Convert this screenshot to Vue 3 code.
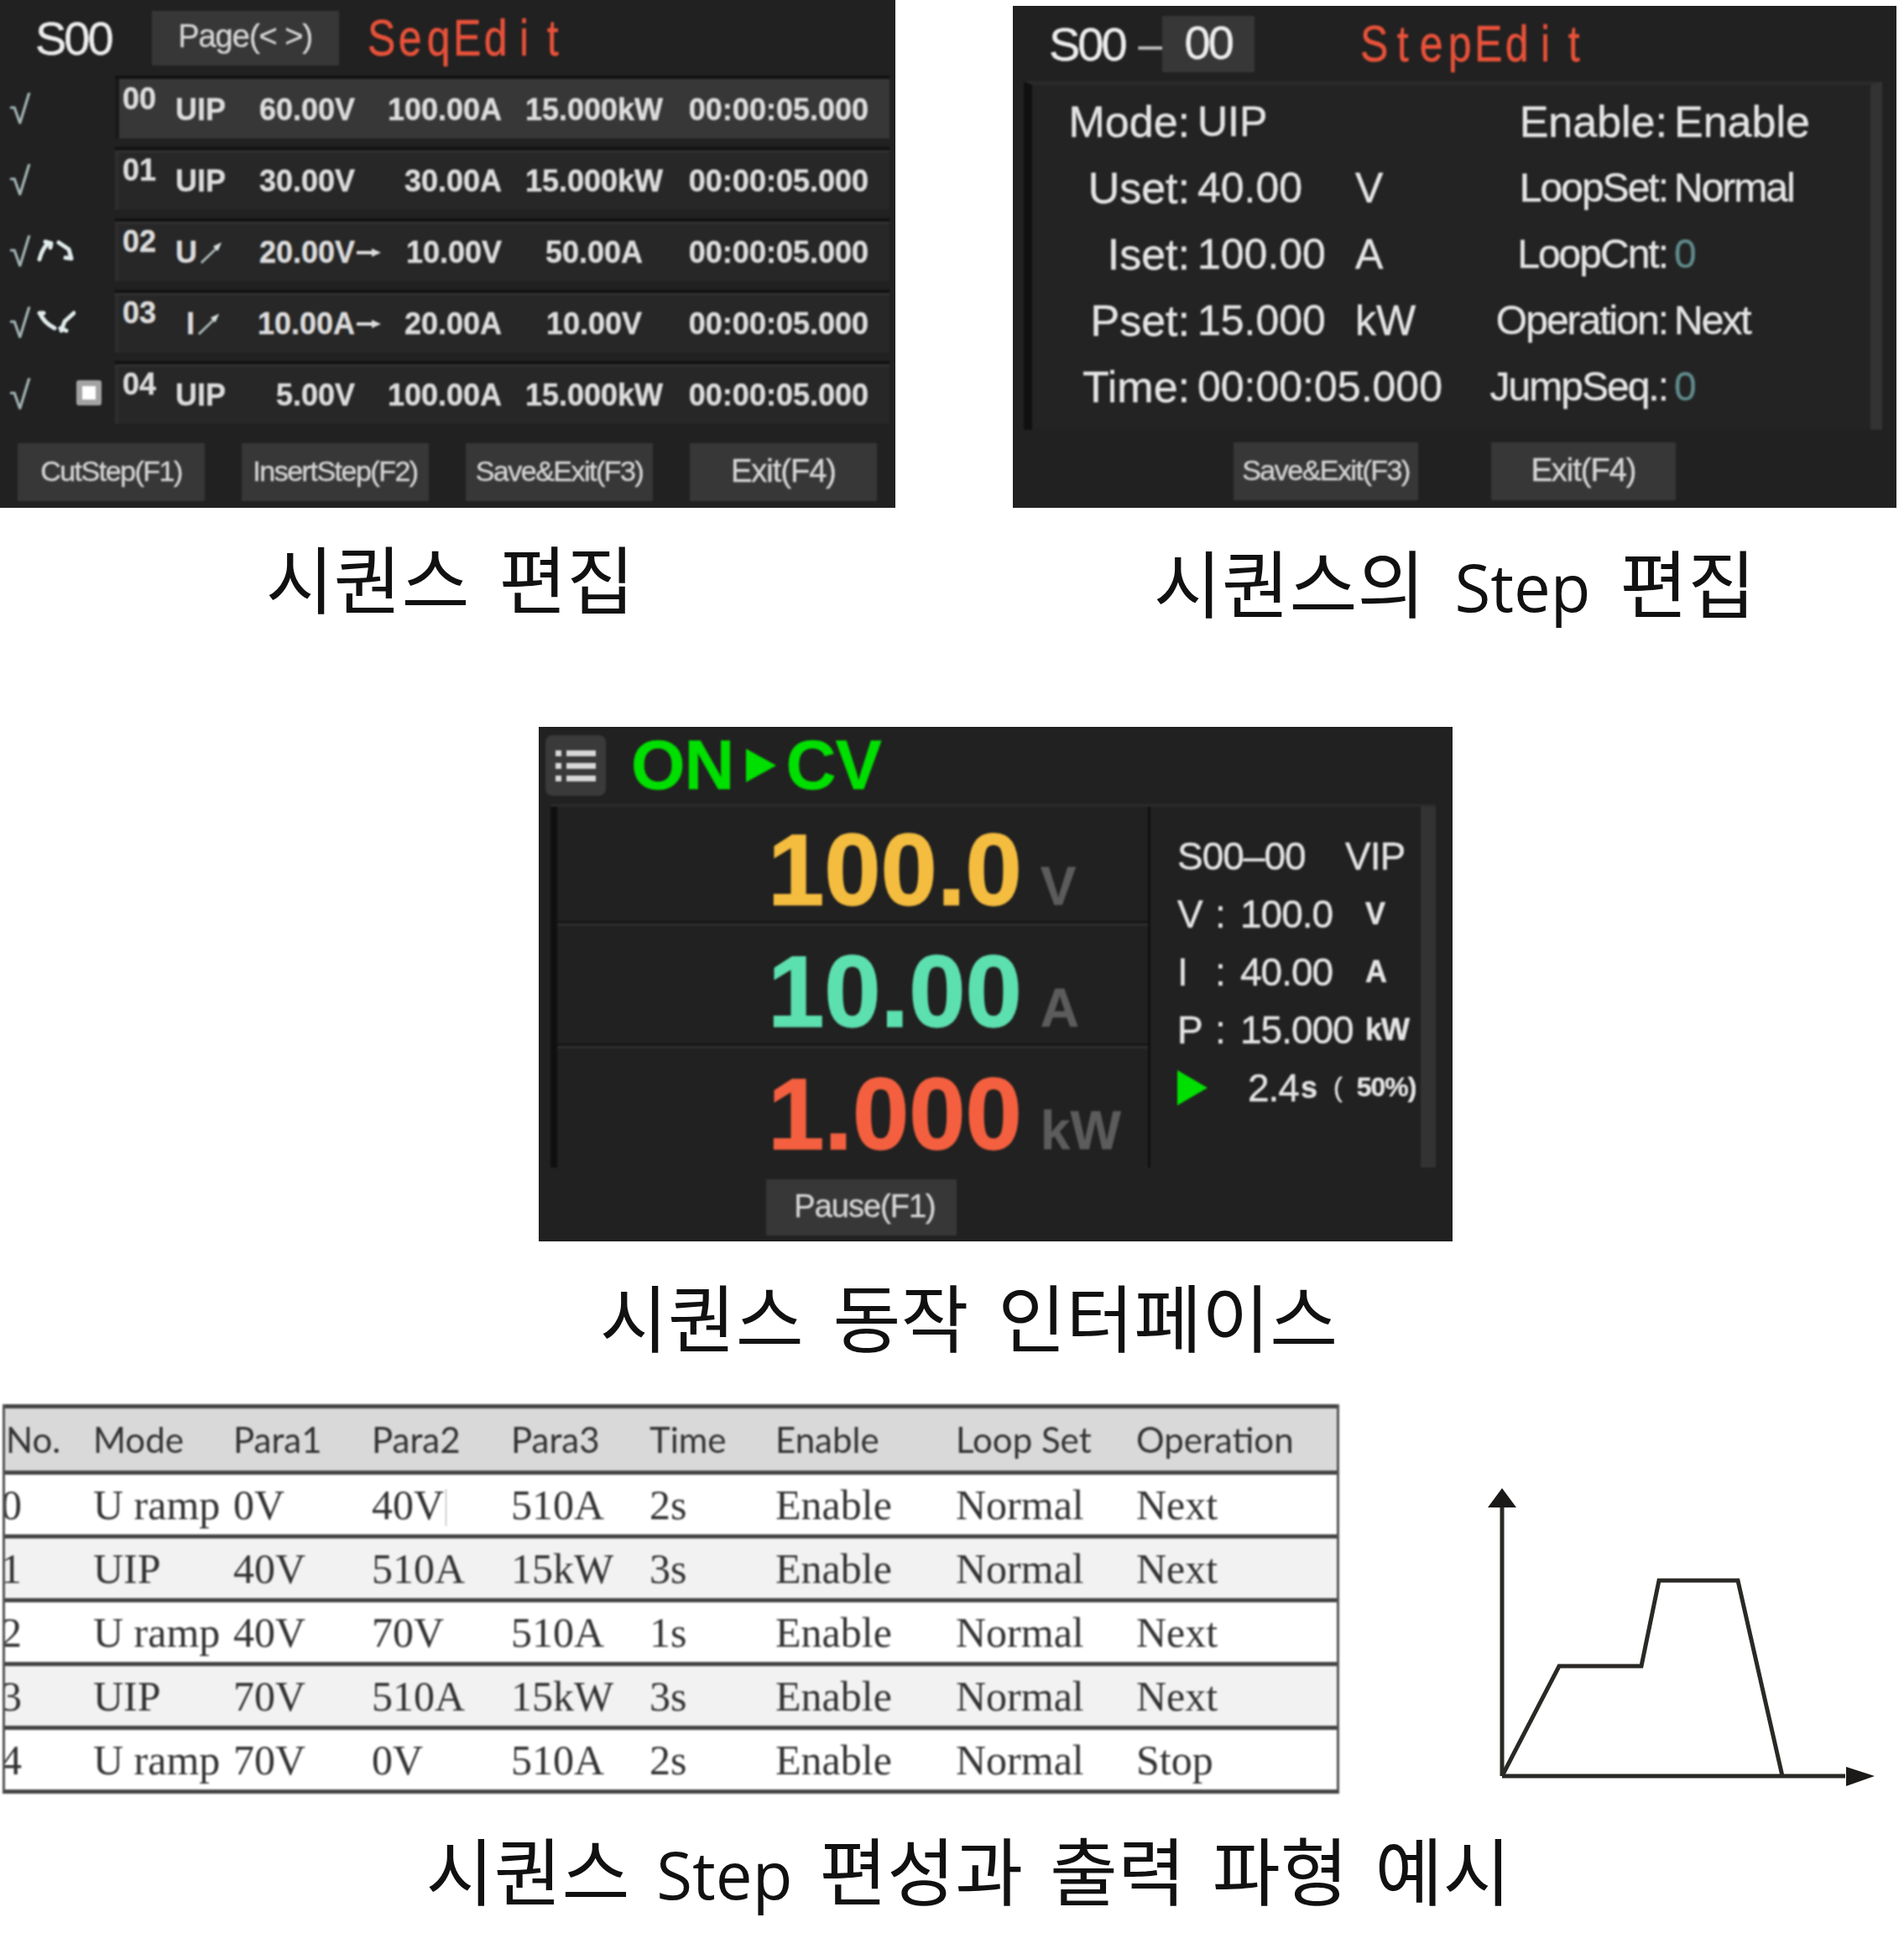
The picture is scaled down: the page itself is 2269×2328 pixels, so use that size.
<template>
  <div class="page">
    <div class="top-row">
      <div class="fig-seq">
        <div class="panel seq-panel">
          <div class="seq-head">
            <span class="sid">S00</span>
            <span class="soft-btn page-btn">Page(&lt; &gt;)</span>
            <span class="title"><span v-for="(c, i) in 'SeqEdit'" :key="i" class="slot">{{ c }}</span></span>
          </div>
          <div class="seq-list">
            <div v-for="(r, i) in seqRows" :key="r.no" class="seq-line">
              <div class="status">
                <span class="check">√</span>
                <svg v-if="r.icon === 'up'" class="ramp" viewBox="0 0 46 28" fill="none" stroke="#e2ecec" stroke-width="5" stroke-linecap="round" stroke-linejoin="round">
                  <path d="M3 25 Q6 13 13 6 M10 4 L17 6 L16 11" />
                  <path d="M26 5 L38 13 L41 24 M41 24 L34 23" />
                </svg>
                <svg v-if="r.icon === 'down'" class="ramp" viewBox="0 0 46 28" fill="none" stroke="#e2ecec" stroke-width="5" stroke-linecap="round" stroke-linejoin="round">
                  <path d="M3 4 L8 4 M4 5 Q8 15 21 22" />
                  <path d="M29 25 L33 14 L44 4 M28 22 L35 25" />
                </svg>
                <span v-if="r.icon === 'stop'" class="stop"></span>
              </div>
              <div class="seq-row" :class="{ active: i === 0 }">
                <span class="no">{{ r.no }}</span>
                <span class="mode" :class="{ shifted: r.mode === 'I' }">
                  {{ r.mode }}
                  <svg v-if="r.ramp" class="ramp-arrow" viewBox="0 0 30 30">
                    <path d="M2 28 L24 7" stroke="#a9b8b8" stroke-width="3" />
                    <path d="M28 2 L17 7 L23 13 Z" fill="#d5dddd" />
                  </svg>
                </span>
                <span class="val">{{ r.a }}</span>
                <span class="arrow"><svg v-if="r.ramp" viewBox="0 0 30 12" width="30" height="12"><path d="M0 6 H20" stroke="#ddd" stroke-width="4" /><path d="M18 1 L29 6 L18 11 Z" fill="#ddd" /></svg></span>
                <span class="val">{{ r.b }}</span>
                <span class="val mid">{{ r.c }}</span>
                <span class="val">{{ r.t }}</span>
              </div>
            </div>
          </div>
          <div class="seq-btns">
            <span v-for="b in seqBtns" :key="b" class="soft-btn seq-btn" :class="{ wide: b === 'Exit(F4)' }">{{ b }}</span>
          </div>
        </div>
        <div class="caption cap-one">시퀀스 편집</div>
      </div>

      <div class="fig-step">
        <div class="panel step-panel">
          <div class="step-head">
            <span class="sid">S00</span>
            <span class="dash">–</span>
            <span class="soft-btn step-box">00</span>
            <span class="title step-title"><span v-for="(c, i) in 'StepEdit'" :key="i" class="slot">{{ c }}</span></span>
          </div>
          <div class="step-body">
            <div v-for="r in stepRows" :key="r.label" class="step-line">
              <span class="s-label">{{ r.label }}</span>
              <span class="s-value">{{ r.value }}</span>
              <span class="s-unit">{{ r.unit }}</span>
              <span class="s-label2" :class="{ wide: r.wide }">{{ r.label2 }}</span>
              <span class="s-value2" :class="{ wide: r.wide, teal: r.value2 === '0' }">{{ r.value2 }}</span>
            </div>
          </div>
          <div class="step-btns">
            <span class="soft-btn step-btn">Save&amp;Exit(F3)</span>
            <span class="soft-btn step-btn wide">Exit(F4)</span>
          </div>
        </div>
        <div class="caption cap-two">시퀀스의 <span class="lat">Step</span> 편집</div>
      </div>
    </div>

    <div class="fig-run">
      <div class="panel run-panel">
        <div class="run-head">
          <span class="menu-btn">
            <svg viewBox="0 0 52 46" width="52" height="46">
              <g fill="#d8d8d8">
                <rect x="2" y="5" width="7" height="7" />
                <rect x="15" y="5" width="35" height="7" />
                <rect x="2" y="20" width="7" height="7" />
                <rect x="15" y="20" width="35" height="7" />
                <rect x="2" y="35" width="7" height="7" />
                <rect x="15" y="35" width="35" height="7" />
              </g>
            </svg>
          </span>
          <span class="run-state">ON</span>
          <svg class="run-tri" viewBox="0 0 36 40" width="36" height="40"><path d="M0 0 L36 20 L0 40 Z" fill="#00e000" /></svg>
          <span class="run-state">CV</span>
        </div>
        <div class="run-body">
          <div class="run-main">
            <div v-for="m in meters" :key="m.unit" class="meter">
              <span class="meter-val" :style="{ color: m.color }">{{ m.value }}</span>
              <span class="meter-unit">{{ m.unit }}</span>
            </div>
          </div>
          <div class="run-side">
            <div class="side-line">
              <span class="side-id">S00–00</span>
              <span>VIP</span>
            </div>
            <div v-for="s in sideRows" :key="s.k" class="side-line">
              <span class="side-k">{{ s.k }}</span>
              <span class="side-colon">:</span>
              <span class="side-v">{{ s.v }}</span>
              <span class="side-u">{{ s.u }}</span>
            </div>
            <div class="side-line">
              <svg class="side-tri" viewBox="0 0 36 42" width="36" height="42"><path d="M0 0 L36 21 L0 42 Z" fill="#00e000" /></svg>
              <span>2.4</span><span class="side-s">s</span>
              <span class="side-paren">(</span>
              <span class="side-pct">50%)</span>
            </div>
          </div>
          <div class="run-bar"></div>
        </div>
        <div class="run-foot">
          <span class="soft-btn run-btn">Pause(F1)</span>
        </div>
      </div>
      <div class="caption cap-three">시퀀스 동작 인터페이스</div>
    </div>

    <div class="bottom-row">
      <div class="table">
        <div class="t-row t-head">
          <span v-for="h in heads" :key="h" class="t-cell">{{ h }}</span>
        </div>
        <div v-for="(r, i) in tableRows" :key="i" class="t-row" :class="{ alt: i % 2 === 1 }">
          <span class="t-cell t-no">{{ i }}</span>
          <span v-for="(c, j) in r" :key="j" class="t-cell">{{ c }}<i v-if="i === 0 && j === 2" class="cursor"></i></span>
        </div>
      </div>
      <svg class="chart" viewBox="0 0 490 370" width="490" height="370" fill="none" stroke="#2b2926" stroke-width="5">
        <path d="M21 356 V30" />
        <path d="M21 356 H430" />
        <path d="M21 356 L89 225 H187 L208 123 H302 L355 356" stroke-linejoin="miter" />
        <path d="M21 13 L38 36 H4 Z" fill="#1c1a18" stroke="none" />
        <path d="M465 356 L431 345 V368 Z" fill="#1c1a18" stroke="none" />
      </svg>
    </div>
    <div class="caption cap-four">시퀀스 <span class="lat">Step</span> 편성과 출력 파형 예시</div>
  </div>
</template>

<script setup>
const seqRows = [
  { no: '00', mode: 'UIP', a: '60.00V', b: '100.00A', c: '15.000kW', t: '00:00:05.000' },
  { no: '01', mode: 'UIP', a: '30.00V', b: '30.00A', c: '15.000kW', t: '00:00:05.000' },
  { no: '02', mode: 'U', ramp: true, icon: 'up', a: '20.00V', b: '10.00V', c: '50.00A', t: '00:00:05.000' },
  { no: '03', mode: 'I', ramp: true, icon: 'down', a: '10.00A', b: '20.00A', c: '10.00V', t: '00:00:05.000' },
  { no: '04', mode: 'UIP', icon: 'stop', a: '5.00V', b: '100.00A', c: '15.000kW', t: '00:00:05.000' }
]

const seqBtns = ['CutStep(F1)', 'InsertStep(F2)', 'Save&Exit(F3)', 'Exit(F4)']

const stepRows = [
  { label: 'Mode:', value: 'UIP', unit: '', label2: 'Enable:', value2: 'Enable', wide: true },
  { label: 'Uset:', value: '40.00', unit: 'V', label2: 'LoopSet:', value2: 'Normal' },
  { label: 'Iset:', value: '100.00', unit: 'A', label2: 'LoopCnt:', value2: '0' },
  { label: 'Pset:', value: '15.000', unit: 'kW', label2: 'Operation:', value2: 'Next' },
  { label: 'Time:', value: '00:00:05.000', unit: '', label2: 'JumpSeq.:', value2: '0' }
]

const meters = [
  { value: '100.0', unit: 'V', color: '#f5bd3f' },
  { value: '10.00', unit: 'A', color: '#5de0b0' },
  { value: '1.000', unit: 'kW', color: '#f4603f' }
]

const sideRows = [
  { k: 'V', v: '100.0', u: 'V' },
  { k: 'I', v: '40.00', u: 'A' },
  { k: 'P', v: '15.000', u: 'kW' }
]

const heads = ['No.', 'Mode', 'Para1', 'Para2', 'Para3', 'Time', 'Enable', 'Loop Set', 'Operation']

const tableRows = [
  ['U ramp', '0V', '40V', '510A', '2s', 'Enable', 'Normal', 'Next'],
  ['UIP', '40V', '510A', '15kW', '3s', 'Enable', 'Normal', 'Next'],
  ['U ramp', '40V', '70V', '510A', '1s', 'Enable', 'Normal', 'Next'],
  ['UIP', '70V', '510A', '15kW', '3s', 'Enable', 'Normal', 'Next'],
  ['U ramp', '70V', '0V', '510A', '2s', 'Enable', 'Normal', 'Stop']
]
</script>

<style>
html, body {
  margin: 0;
  background: #fff;
}
</style>

<style scoped>
.page {
  width: 2269px;
  height: 2328px;
  overflow: hidden;
  background: #fff;
  font-family: "Liberation Sans", Arial, sans-serif;
}

.top-row {
  display: flex;
  height: 745px;
}

.panel {
  background: #212121;
  color: #e4e4e4;
  box-sizing: border-box;
  -webkit-text-stroke: 0.4px currentColor;
}

.panel > * {
  filter: blur(0.8px);
}

.soft-btn {
  display: flex;
  align-items: center;
  justify-content: center;
  padding-bottom: 3px;
  background: #373737;
  color: #d4d4d4;
  box-sizing: border-box;
  font-size: 34px;
  letter-spacing: -1.5px;
  white-space: nowrap;
}

.soft-btn.wide,
.page-btn,
.run-btn {
  font-size: 38px;
  letter-spacing: -1px;
}

.sid {
  font-size: 56px;
  letter-spacing: -3px;
  color: #ededed;
}

.title {
  display: flex;
  font-size: 50px;
  color: #e8523a;
  transform: scaleY(1.22);
}

.slot {
  display: block;
  width: 34px;
  text-align: center;
}

/* seq edit */
.fig-seq {
  width: 1067px;
}

.seq-panel {
  height: 605px;
  width: 1067px;
}

.seq-head {
  display: flex;
  align-items: center;
  height: 90px;
  padding-left: 42px;
}

.page-btn {
  width: 223px;
  height: 65px;
  margin-left: 48px;
}

.seq-head .title {
  margin-left: 34px;
}

.seq-list {
  display: flex;
  flex-direction: column;
  gap: 10px;
}

.seq-line {
  display: flex;
  height: 75px;
}

.status {
  width: 137px;
  display: flex;
  align-items: center;
  padding-left: 11px;
  box-sizing: border-box;
}

.check {
  font-size: 46px;
  color: #a6b7b7;
  width: 33px;
  padding-top: 6px;
}

.ramp {
  width: 46px;
  height: 28px;
}

.stop {
  width: 30px;
  height: 30px;
  margin-left: 47px;
  box-sizing: border-box;
  background: #fff;
  border: 7px solid #a3a3a3;
  border-radius: 3px;
}

.seq-row {
  width: 923px;
  display: grid;
  grid-template-columns: 63px 80px 134px 33px 142px 220px 217px;
  align-items: center;
  box-sizing: border-box;
  padding: 3px 0 0 9px;
  background: #272727;
  border-top: 4px solid #131313;
  box-shadow: inset 0 3px 0 #303030, inset 4px 0 0 #2e2e2e;
  font-size: 36px;
  font-weight: bold;
  color: #dcdcdc;
}

.seq-row.active {
  background: #373737;
  box-shadow: inset 5px 0 0 #1a1a1a;
}

.no {
  align-self: start;
}

.mode {
  display: flex;
  align-items: center;
  gap: 3px;
}

.mode.shifted {
  padding-left: 13px;
}

.ramp-arrow {
  width: 28px;
  height: 28px;
}

.val {
  text-align: right;
  white-space: nowrap;
}

.val.mid {
  text-align: center;
}

.arrow {
  display: flex;
  align-items: center;
  justify-content: center;
}

.seq-btns {
  display: flex;
  gap: 44px;
  margin-top: 23px;
  padding-left: 21px;
}

.seq-btn {
  width: 223px;
  height: 69px;
}

/* captions */
.caption {
  font-family: "Open Sans", "Noto Sans CJK KR", sans-serif;
  font-size: 88px;
  line-height: 100px;
  color: #111;
  text-align: center;
  white-space: nowrap;
  word-spacing: 12px;
}

.lat {
  font-size: 78px;
}

.cap-one {
  margin-top: 35px;
  padding-left: 6px;
}

.cap-two {
  margin-top: 40px;
}

.cap-three {
  margin-top: 41px;
  margin-left: -64px;
}

.cap-four {
  margin-top: 45px;
  margin-left: 39px;
  word-spacing: 9px;
}

/* step edit */
.fig-step {
  width: 1053px;
  margin-left: 140px;
  padding-top: 7px;
}

.step-panel {
  height: 598px;
}

.step-head {
  display: flex;
  align-items: center;
  height: 90px;
  padding-left: 43px;
}

.dash {
  font-size: 52px;
  margin-left: 16px;
  width: 28px;
  color: #bdbdbd;
}

.step-box {
  width: 110px;
  height: 67px;
  font-size: 56px;
  letter-spacing: -3px;
  color: #ededed;
}

.step-title {
  margin-left: 126px;
}

.step-body {
  height: 415px;
  margin-left: 13px;
  width: 1023px;
  box-sizing: border-box;
  padding-top: 4px;
  background: #232323;
  border-top: 4px solid #2b2b2b;
  border-left: 10px solid #101010;
  border-right: 14px solid #333;
}

.step-line {
  display: grid;
  grid-template-columns: 188px 188px 149px 232px 1fr;
  height: 79px;
  align-items: center;
  font-size: 52px;
  white-space: nowrap;
}

.s-label,
.s-label2 {
  text-align: right;
}

.s-value {
  padding-left: 9px;
  font-size: 50px;
}

.s-unit {
  padding-left: 9px;
  font-size: 50px;
}

.s-label2,
.s-value2 {
  font-size: 48px;
  letter-spacing: -2px;
}

.s-label2.wide,
.s-value2.wide {
  font-size: 52px;
  letter-spacing: 0;
}

.s-value2 {
  padding-left: 8px;
}

.teal {
  color: #5f8a8a;
}

.step-btns {
  display: flex;
  gap: 87px;
  margin-top: 15px;
  padding-left: 263px;
}

.step-btn {
  width: 220px;
  height: 69px;
}

/* running */
.fig-run {
  margin-top: 121px;
  margin-left: 642px;
  width: 1089px;
}

.run-panel {
  height: 613px;
}

.run-head {
  display: flex;
  align-items: center;
  height: 92px;
  padding-left: 8px;
}

.menu-btn {
  display: flex;
  align-items: center;
  justify-content: center;
  width: 72px;
  height: 72px;
  border-radius: 8px;
  background: #3a3a3a;
}

.run-state {
  font-size: 83px;
  font-weight: bold;
  color: #00e000;
  margin-left: 30px;
  letter-spacing: -1px;
}

.run-tri {
  margin-left: 14px;
  margin-right: -18px;
}

.run-body {
  display: flex;
  height: 433px;
  margin-left: 14px;
  width: 1055px;
  border-top: 3px solid #2b2b2b;
  box-sizing: border-box;
}

.run-main {
  width: 712px;
  box-sizing: border-box;
  border-left: 8px solid #101010;
}

.meter {
  display: flex;
  align-items: baseline;
  height: 146px;
  box-sizing: border-box;
  padding: 16px 0 0 251px;
  border-bottom: 3px solid #161616;
  box-shadow: 0 3px 0 #2d2d2d;
}

.meter:first-child {
  height: 139px;
  padding-top: 10px;
}

.meter:last-child {
  height: 145px;
  border-bottom: 0;
  box-shadow: none;
}

.meter-val {
  font-size: 121px;
  font-weight: bold;
  line-height: 130px;
  -webkit-text-stroke: 1.5px currentColor;
}

.meter-unit {
  font-size: 64px;
  font-weight: bold;
  color: #5c5c5c;
  margin-left: 22px;
}

.run-side {
  width: 325px;
  box-sizing: border-box;
  padding: 24px 0 0 32px;
  border-left: 3px solid #111;
  overflow: hidden;
  font-size: 46px;
  letter-spacing: -1px;
}

.side-line {
  display: flex;
  align-items: center;
  height: 69px;
  white-space: nowrap;
}

.side-id {
  width: 200px;
}

.side-k {
  width: 45px;
}

.side-colon {
  width: 30px;
}

.side-v {
  width: 149px;
}

.side-u {
  font-size: 36px;
  font-weight: bold;
}

.side-tri {
  margin-right: 48px;
}

.side-s {
  font-size: 36px;
  font-weight: bold;
  margin-left: 2px;
}

.side-paren {
  font-size: 32px;
  margin-left: 20px;
}

.side-pct {
  font-size: 32px;
  font-weight: bold;
  margin-left: 18px;
}

.run-bar {
  width: 18px;
  background: #333;
}

.run-foot {
  padding: 14px 0 0 271px;
}

.run-btn {
  width: 227px;
  height: 67px;
  padding-left: 8px;
}

/* table */
.bottom-row {
  display: flex;
  align-items: flex-start;
  margin-top: 53px;
  height: 461px;
}

.table {
  width: 1593px;
  margin-left: 3px;
  box-sizing: border-box;
  overflow: hidden;
  border-left: 3px solid #555;
  border-right: 3px solid #555;
  border-bottom: 5px solid #444;
  filter: blur(0.8px);
  color: #333;
  font-family: "Liberation Serif", serif;
  font-size: 50px;
}

.t-row {
  display: grid;
  grid-template-columns: 105px 167px 165px 166px 165px 150px 215px 215px 1fr;
  align-items: center;
  height: 76px;
  box-sizing: border-box;
  border-top: 5px solid #444;
}

.t-head {
  height: 79px;
  background: #d9d9d9;
  font-family: Lato, sans-serif;
  font-size: 42px;
}

.alt {
  background: #f2f2f2;
}

.t-cell {
  white-space: nowrap;
}

.t-head .t-cell:first-child {
  margin-left: 1px;
}

.t-no {
  margin-left: -5px;
}

.cursor {
  display: inline-block;
  width: 1px;
  height: 44px;
  margin-left: 2px;
  vertical-align: -8px;
  background: #aaa;
}

.chart {
  margin: 87px 0 0 173px;
  filter: blur(0.6px);
}
</style>
